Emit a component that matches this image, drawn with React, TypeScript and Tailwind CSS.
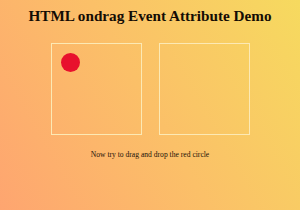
export default function App() {
  return (
    <div className="flex h-[210px] w-[300px] flex-col items-center overflow-hidden bg-[linear-gradient(60deg,#fea570_0%,#fbc068_50%,#f6da5f_100%)] font-['Liberation_Serif',serif] text-[#1c1208]">
      <h1 className="mt-[7px] text-[15.2px] font-bold leading-[18px] text-[#140c04]">
        HTML ondrag Event Attribute Demo
      </h1>
      <div className="mt-[18px] flex gap-[17px]">
        <div className="h-[92px] w-[91px] border border-[#fce9b4] p-[9px]">
          <div className="h-[19px] w-[19px] rounded-full bg-[#e8112d]" />
        </div>
        <div className="h-[92px] w-[91px] border border-[#fce9b4]" />
      </div>
      <p className="mt-[15px] text-[7.6px] leading-[10px]">
        Now try to drag and drop the red circle
      </p>
    </div>
  );
}
